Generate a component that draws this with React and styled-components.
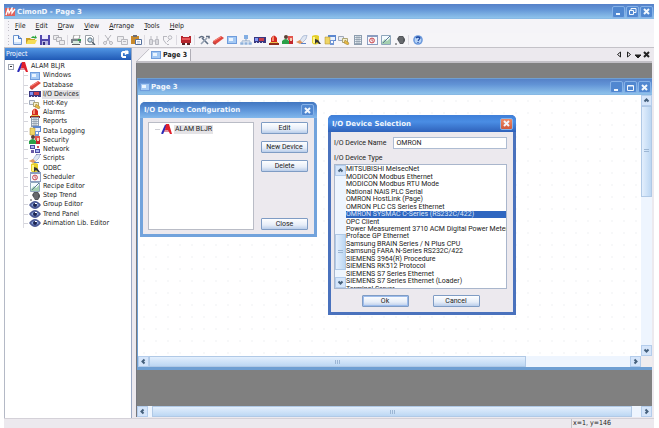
import React from "react";
import styled, { createGlobalStyle, css } from "styled-components";

const ui = '"DejaVu Sans Condensed", "DejaVu Sans", sans-serif';
const sans = 'Roboto, "Liberation Sans", Arial, sans-serif';
const titleFont = '"DejaVu Sans", sans-serif';

const Global = createGlobalStyle`
  * { box-sizing: border-box; }
  body { margin: 0; background: #fff; }
  button, input { font: inherit; color: inherit; margin: 0; padding: 0; }
  ul { list-style: none; margin: 0; padding: 0; }
`;

/* ---------- icons ---------- */

const drawings = {
  logo: (
    <>
      <path d="M0 1h10v8H0z" fill="#e0635c" />
      <path d="M1 8 3 2l1 4 3-5v5l3-4" fill="none" stroke="#fff" strokeWidth="1.3" />
    </>
  ),
  project: (
    <>
      <path d="M1 10 5 1" stroke="#2a2ab8" strokeWidth="2" />
      <path d="M5 0h3l3 10H9L7 6H4z" fill="#e0202c" />
      <path d="M3 7h5" stroke="#c02040" />
    </>
  ),
  newFile: (
    <>
      <path d="M2.500.5h5l3 3v6h-8z" fill="#f5faff" stroke="#6c94cf" />
      <path d="M7.500.5v3h3" fill="#bcd4f4" stroke="#3e6fc0" />
      <path d="M3 7h7v2H3z" fill="#cfe2fa" />
    </>
  ),
  open: (
    <>
      <path d="M1 3h4l1 1h4v5H1z" fill="#c99f25" />
      <path d="m1 9 2-4h9l-2 4z" fill="#f5dc55" />
      <path d="M6 3c1-2 3-2 4-1V0l2 3-3 1 1-1" fill="#2ba63d" />
    </>
  ),
  save: (
    <>
      <path d="M1 0h10v10H1z" fill="#5148ad" />
      <path d="M3 0h6v4H3z" fill="#eceafc" />
      <path d="M3 6h6v4H3z" fill="#b9b6e0" />
      <path d="M4 7h2v3H4z" fill="#37307f" />
    </>
  ),
  copies: (
    <g fill="#ececee" stroke="#b4b4ba">
      <path d="M.5.5h5v4h-5z" />
      <path d="M3.500 2.500h5v4h-5z" />
      <path d="M6.500 5.500h5v4h-5z" />
    </g>
  ),
  print: (
    <>
      <path d="m4 0 6 0-1 4H3z" fill="#fff" stroke="#777" strokeWidth=".7" />
      <path d="M1 4h10v4H1z" fill="#7c858c" />
      <path d="M3 6h6v3H3z" fill="#d6e9dc" />
      <path d="M8 4h3v2H8z" fill="#2f9f4d" />
      <path d="M2 9h8v1H2z" fill="#5d6469" />
    </>
  ),
  preview: (
    <>
      <path d="M1.500.5h6l2 2v7h-8z" fill="#fff" stroke="#9aa0a8" />
      <circle cx="6" cy="5" r="2.200" fill="#c7e1f0" stroke="#5d6c78" />
      <path d="m8 7 3 3" stroke="#4d5c68" strokeWidth="1.400" />
    </>
  ),
  cut: (
    <g fill="none" stroke="#b5b5bb">
      <path d="m3 0 5 7M9 0 4 7" />
      <circle cx="3" cy="8" r="1.500" />
      <circle cx="9" cy="8" r="1.500" />
    </g>
  ),
  copy: (
    <g fill="#eeeef0" stroke="#b9b9bf">
      <path d="M1.500 1.500h6v5h-6z" />
      <path d="M5.500 4.500h6v5h-6z" />
      <path d="M7 6.500h3" />
    </g>
  ),
  paste: (
    <>
      <path d="M1 1h8v8H1z" fill="#c98a2b" />
      <path d="M3 0h4v2H3z" fill="#6b6f78" />
      <path d="M5.500 4.500h6v5h-6z" fill="#fff" stroke="#56719e" />
      <path d="M7 6.500h3M7 8h3" stroke="#8aa0c0" strokeWidth=".6" />
    </>
  ),
  find: (
    <g fill="#d9d9de" stroke="#b9b9c0">
      <path d="M1.500 4.500h3v5h-3zM7.500 4.500h3v5h-3z" />
      <path d="M3 1v3M9 1v3M5 6h2" />
    </g>
  ),
  replace: (
    <g fill="none" stroke="#b9b9c0">
      <path d="M1 1.500h4M1.500 2v3l3 4" />
      <circle cx="8" cy="2.500" r="1.800" />
      <path d="M5 7 8 4M5 9.500h2" />
    </g>
  ),
  machine: (
    <>
      <path d="M1 1h2v1h6V1h2v7H1z" fill="#b5262d" />
      <path d="M2 3h8v2H2z" fill="#e8575a" />
      <path d="M2 8h3v2H2zM7 8h3v2H7z" fill="#562428" />
    </>
  ),
  tools: (
    <g fill="none" strokeWidth="1.600">
      <path d="m4 3 6 6" stroke="#5f6f86" />
      <path d="M9 3 3 9" stroke="#96a1b2" />
      <path d="M1 3q3-3 5 0M8 1.500h3v2" stroke="#5f6c80" />
    </g>
  ),
  database: (
    <>
      <path d="m1 6 8-5 3 2-8 6H2z" fill="#e0453c" />
      <path d="m2 6 7-4" stroke="#f58a80" />
      <path d="m1 7 1 2h2" stroke="#a93d3b" fill="none" />
    </>
  ),
  windows: (
    <>
      <path d="M1 1h10v8H1z" fill="#6f9cdc" />
      <path d="M2 2h8v6H2z" fill="#a4c9f4" />
      <path d="M3 3h4v3H3z" fill="#eaf4ff" />
    </>
  ),
  netTree: (
    <>
      <path d="M6 3v3M2 8V6h8v2" fill="none" stroke="#8aa5c4" />
      <path d="M4 0h4v4H4z" fill="#83aee3" />
      <path d="M0 7h4v3H0zM4 7h4v3H4zM8 7h4v3H8z" fill="#8fb1da" stroke="#fff" strokeWidth=".5" />
    </>
  ),
  io: (
    <>
      <path d="M0 2h12v6H0z" fill="#3a3880" />
      <path d="M1 3h3v3H1z" fill="#7f96f4" />
      <path d="M5 3h5v3H5z" fill="#c8404e" />
      <path d="M2 7h1v1H2zM5 7h1v1H5zM8 7h1v1H8z" fill="#d8d8f0" />
    </>
  ),
  alarms: (
    <>
      <path d="M3 7V3q3-5 6 0v4z" fill="#d2281f" />
      <path d="M4 3q1-2 2-2v5H4z" fill="#f58c6e" />
      <path d="M1 8h10v2H1z" fill="#8d2a1c" />
      <path d="M2 7h8v1H2z" fill="#edc04b" />
    </>
  ),
  security: (
    <>
      <circle cx="4" cy="2" r="2" fill="#5b4137" />
      <path d="M0 9V6q4-4 7 0v3z" fill="#2aa048" />
      <path d="M6 1h5v4H6z" fill="#e2544e" />
      <path d="M7 5h4v4H7z" fill="#c3262c" />
      <path d="M8 3h2v3H8z" fill="#f3cbb0" />
    </>
  ),
  scripts: (
    <>
      <path d="m7 1 4-1-1 4-4 4-3-1z" fill="#dfe6f2" stroke="#8fa5c8" strokeWidth=".6" />
      <path d="m0 7 4-2 3 3-3 1z" fill="#e09860" />
      <path d="M5 8h5v1H5z" fill="#5981c6" />
    </>
  ),
  odbc: (
    <>
      <path d="M2 1q4-2 7 0v7q-4 3-7 0z" fill="#e5cf2a" />
      <path d="M3 2h2v6H3z" fill="#fff58a" />
      <path d="m5 4 3 1 3 4H9L7 7 5 9z" fill="#333" />
    </>
  ),
  logging: (
    <>
      <path d="M4 0h8v6H4z" fill="#5c87d0" />
      <path d="M5 2h6v3H5z" fill="#eaf2ff" />
      <path d="M1 2h5v7H1z" fill="#f0d565" stroke="#a98a2b" strokeWidth=".5" />
      <path d="M6 5h4v5H6z" fill="#7397d4" />
      <path d="M7 6h2v2H7z" fill="#fff" />
    </>
  ),
  hotkey: (
    <>
      <path d="M.5 1.500h5v4h-5z" fill="#e9edf5" stroke="#9fa8b8" />
      <path d="M4.500 3.500h5v4h-5z" fill="#f5f0ce" stroke="#ada574" />
      <path d="m7 5 4 3-1 2-4-2z" fill="#e6b944" stroke="#95772c" strokeWidth=".5" />
    </>
  ),
  reports: (
    <>
      <path d="M2 0h8v10H2z" fill="#8d9daf" />
      <path d="M3 1h6v8H3z" fill="#e6edf3" />
      <path d="M3 2.500h6M3 4.500h6M3 6.500h6M3 8.500h6M5 1v8M7 1v8" stroke="#7b8b9c" strokeWidth=".6" />
    </>
  ),
  network: (
    <>
      <path d="M1 0h5v4H1zM6 4h5v4H6z" fill="#4c4aa1" />
      <path d="M2 1h3v2H2zM7 5h3v2H7z" fill="#a8b5ee" />
      <path d="M2 5h3v3H2zM7 9h5v1H7z" fill="#6a5aa5" />
      <path d="M8 1h2v2H8z" fill="#d05a5e" />
    </>
  ),
  scheduler: (
    <>
      <path d="M1 0h11v10H1z" fill="#8a9dc0" />
      <path d="M2 2h9v7H2z" fill="#f8f8fc" />
      <circle cx="6" cy="5.500" r="2.400" fill="none" stroke="#c8434a" />
      <path d="M6 4v2h1.500" stroke="#c8434a" fill="none" strokeWidth=".8" />
    </>
  ),
  recipe: (
    <>
      <path d="M1.500.5h9v9h-9z" fill="#f4fbff" stroke="#8fa7bd" />
      <path d="m2 7 3-3 2 2 3-3v6H2z" fill="#a4d0b0" />
      <path d="m3 8 7-7" stroke="#5d7a98" />
    </>
  ),
  step: (
    <>
      <path d="m3 4 2-3h4l2 3v2L9 9H6z" fill="#54575b" />
      <path d="M6 2v6M8 2v6" stroke="#8a8d91" strokeWidth=".7" />
      <path d="M1 9h2" stroke="#44474b" />
    </>
  ),
  eye: (
    <>
      <path d="M0 5q6-8 12 0-6 8-12 0z" fill="#4c5a96" />
      <path d="M2 5q4-5 8 0-4 4-8 0z" fill="#8aa4dc" />
      <circle cx="6" cy="5" r="2" fill="#1d2450" />
      <path d="M6 3h2v1H6z" fill="#fff" />
    </>
  ),
  help: (
    <>
      <circle cx="6" cy="5" r="4.800" fill="#6a98dc" />
      <circle cx="6" cy="5" r="3.300" fill="#b8d4f7" />
      <path d="M4 3q2-2 4 0L6 6M6 7v1" fill="none" stroke="#1f49a0" strokeWidth="1.200" />
    </>
  ),
};

const IconSvg = styled.svg`
  display: block;
  flex: none;
  width: 12px;
  height: 10px;
`;

const Icon = ({ name }) => (
  <IconSvg viewBox="0 0 12 10" aria-hidden="true">
    {drawings[name]}
  </IconSvg>
);

const marks = {
  min: "M2 7h4",
  max: "M1.500 2.500h6v5h-6zM2 3h5",
  restore: "M3 3V1.500h5v4H6M1.500 3.500h4v4h-4z",
  close: "m2 2 5 5m0-5-5 5",
  left: "M5.500 2.500 3.500 4.500l2 2",
  right: "m3.500 2.500 2 2-2 2",
  up: "m2.500 5.500 2-2 2 2",
  down: "m2.500 3.500 2 2 2-2",
  triLeft: "M5.500 2v5l-3-2.500z",
  triRight: "M3.500 2v5l3-2.500z",
  fold: "M2 5h6L5 8z",
  dock: "M5 2H3L2 3v3l1 1h3M5 1.500h3M7.500 1v3M5 4.500 7 2",
};

const MarkSvg = styled.svg`
  display: block;
  width: 9px;
  height: 9px;
  fill: ${(p) => (p.$solid ? "currentColor" : "none")};
  stroke: currentColor;
  stroke-width: ${(p) => p.$weight || 1};
`;

const Mark = ({ name, weight, solid }) => (
  <MarkSvg viewBox="0 0 9 9" $weight={weight} $solid={solid} aria-hidden="true">
    <path d={marks[name]} />
  </MarkSvg>
);

/* ---------- shell ---------- */

const Shell = styled.div`
  display: flex;
  flex-direction: column;
  min-height: 100vh;
  padding: 4px 5px 0 4px;
  font: 7px/9px ${ui};
  color: #222;
`;

const blueBar = css`
  background: linear-gradient(#5581c8, #6294d6 35%, #8cc0ea 90%, #86b6e2);
  color: #f2f7fd;
`;

const TitleBar = styled.header`
  ${blueBar}
  display: flex;
  align-items: center;
  height: ${(p) => p.$height}px;
  padding: 0 1px;
  font: bold 7px/10px ${titleFont};
`;

const TitleText = styled.h1`
  flex: 1;
  margin: 0;
  font: inherit;
  white-space: nowrap;
`;

const CaptionButton = styled.button`
  display: grid;
  place-items: center;
  flex: none;
  width: 13px;
  height: 12px;
  margin-left: 1px;
  border: 1px solid #86b2e8;
  border-radius: 2px;
  background: ${(p) => (p.$danger ? "linear-gradient(#ee8a66, #cf5a3c)" : "#5087d0")};
  color: #f2f7fd;
`;

const MenuBar = styled.nav`
  display: flex;
  align-items: center;
  gap: 10px;
  height: 14px;
  padding-left: 4px;
  background: #f5f4f8;
`;

const Grip = styled.span`
  width: 1px;
  height: 10px;
  margin: 0 ${(p) => p.$space}px 0 0;
  background: repeating-linear-gradient(#c2c0c8 0 1px, transparent 1px 3px);
`;

const MenuButton = styled.button`
  border: 0;
  background: none;
  &::first-letter { text-decoration: underline; }
`;

const ToolBar = styled.div`
  display: flex;
  align-items: center;
  height: 15px;
  padding-left: 4px;
  border-bottom: 1px solid #c4c2c8;
  background: #f6f5f8;
`;

const ToolButton = styled.button`
  display: grid;
  place-items: center;
  width: 14px;
  height: 12px;
  border: 0;
  background: none;
`;

const Divider = styled.span`
  width: 1px;
  height: 10px;
  margin: 0 ${(p) => (p.$wide ? 2 : 1)}px 0 1px;
  background: #dddbe2;
`;

const Workspace = styled.div`
  display: flex;
  flex: 1;
  background: #ece9ee;
`;

/* ---------- project tree ---------- */

const Panel = styled.aside`
  display: flex;
  flex-direction: column;
  flex: none;
  width: 128px;
  border-right: 1px solid #9aa8c4;
  border-left: 1px solid #b4b9c6;
  background: #fff;
`;

const PanelHead = styled.h2`
  display: flex;
  align-items: center;
  justify-content: space-between;
  height: 12px;
  margin: 0;
  padding: 0 2px 0 1px;
  background: linear-gradient(#5196e4, #2059b5);
  color: #fff;
  font: 7px/9px ${ui};
`;

const Tree = styled.ul`
  display: grid;
  grid-auto-rows: 1fr;
  height: 166px;
  margin-top: 2px;
`;

const TreeRow = styled.li`
  display: flex;
  align-items: center;
  gap: 1px;
  min-height: 0;
  padding-left: ${(p) => (p.$root ? 3 : 18)}px;
`;

const Toggle = styled.button`
  display: grid;
  place-items: center;
  width: 6px;
  height: 6px;
  margin-right: 2px;
  border: 1px solid #9aa2b0;
  background: #fff;
  &::after { content: ""; width: 2px; height: 1px; background: #333; }
`;

const Branch = styled.span`
  align-self: stretch;
  width: 5px;
  border-left: 1px solid #dcdce2;
  background: linear-gradient(#d4d4da, #d4d4da) 0 50% / 5px 1px no-repeat;
`;

const TreeLabel = styled.span`
  padding: 0 1px;
  line-height: 9px;
  white-space: nowrap;
  background: ${(p) => (p.$active ? "#e4e3e6" : "none")};
`;

/* ---------- documents ---------- */

const Documents = styled.main`
  display: flex;
  flex: 1;
  flex-direction: column;
  min-width: 0;
  margin: 0 2px 1px 4px;
`;

const TabStrip = styled.div`
  display: flex;
  align-items: flex-end;
  justify-content: space-between;
  height: 15px;
  border-bottom: 2px solid #c2c0c6;
`;

const Tab = styled.button`
  display: flex;
  align-items: center;
  gap: 1px;
  height: 12px;
  padding: 0 3px 0 14px;
  border: 0;
  border-right: 1px solid #b0aeb6;
  background: linear-gradient(135deg, #ece9ee 9px, #b9b7bf 9px, #fbfafc 10px);
  font: bold 7px/9px ${ui};
`;

const TabTools = styled.div`
  display: flex;
  align-self: center;
  padding-right: 1px;
`;

const PlainButton = styled.button`
  display: grid;
  place-items: center;
  width: 9px;
  height: 9px;
  border: 0;
  background: none;
`;

const Desk = styled.div`
  display: flex;
  flex: 1;
  flex-direction: column;
  padding-top: 15px;
  border-left: 1px solid #77777c;
  background: #808080;
`;

const PageWindow = styled.section`
  display: flex;
  flex: 1;
  flex-direction: column;
  margin-bottom: 36px;
  border: solid #6f9fd2;
  border-width: 1px 0 3px 1px;
  background: #fff;
`;

const PageBody = styled.div`
  display: flex;
  flex: 1;
`;

const Canvas = styled.div`
  position: relative;
  flex: 1;
  background: radial-gradient(circle, #f7f8f9 1px, transparent 1px) 0 0 / 12px 12px #fff;
`;

const Track = styled.div`
  display: flex;
  flex: none;
  flex-direction: ${(p) => (p.$vertical ? "column" : "row")};
  width: ${(p) => (p.$vertical ? "11px" : "auto")};
  height: ${(p) => (p.$vertical ? "auto" : "11px")};
  background: #eef5fe;
`;

const ArrowButton = styled.button`
  display: grid;
  place-items: center;
  flex: none;
  width: 11px;
  height: 11px;
  border: 1px solid #b4cdec;
  background: #d5e5fa;
  color: #45607c;
`;

const Thumb = styled.div`
  display: grid;
  place-items: center;
  flex: ${(p) => p.$size};
  border: 1px solid #b0c9e6;
  background: ${(p) => `linear-gradient(${p.$vertical ? "90deg" : "180deg"}, #e3effd, #bcd7f3)`};
  &::after {
    content: "";
    width: 5px;
    height: 4px;
    background: repeating-linear-gradient(${(p) => (p.$vertical ? "180deg" : "90deg")}, #9cb6d4 0 1px, transparent 1px 2px);
  }
`;

const Gap = styled.div`
  flex: ${(p) => p.$size};
`;

const Corner = styled.div`
  flex: none;
  width: 11px;
  background: #f0edef;
`;

/* ---------- dialogs ---------- */

const Dialog = styled.section`
  position: absolute;
  left: ${(p) => p.$left}px;
  top: ${(p) => p.$top}px;
  width: ${(p) => p.$width}px;
  border: solid ${(p) => (p.$front ? "#4a72bd" : "#72a3dc")};
  border-width: 0 3px 3px;
  border-radius: 5px 5px 0 0;
  background: ${(p) => (p.$front ? "#4a72bd" : "#72a3dc")};
  font: 7px/9px ${sans};
`;

const DialogHead = styled.header`
  display: flex;
  align-items: center;
  justify-content: space-between;
  height: ${(p) => (p.$front ? 17 : 16)}px;
  margin: 0 -3px;
  padding: 0 3px 0 4px;
  border-radius: 5px 5px 0 0;
  background: ${(p) =>
    p.$front
      ? "linear-gradient(#3f7fd8, #4a8de4 40%, #2f62bb)"
      : "linear-gradient(#4176c0, #5b92d8 45%, #82b8ec)"};
  color: #f2f7fd;
`;

const DialogTitle = styled.h2`
  margin: 0;
  font: bold 7px/10px ${titleFont};
  white-space: nowrap;
`;

const ConfigBody = styled.div`
  display: flex;
  gap: 7px;
  height: 116px;
  padding: 4px 6px 4px 5px;
  background: #ece9ee;
`;

const DeviceTree = styled.ul`
  flex: 1;
  padding: 1px 6px;
  border: 1px solid #b9bcc6;
  background: #fff;
`;

const DeviceRow = styled.li`
  display: flex;
  align-items: center;
  gap: 1px;
  height: 10px;
  &::before { content: ""; width: 5px; height: 1px; background: #d0d0d6; }
`;

const ButtonColumn = styled.div`
  display: flex;
  flex-direction: column;
  gap: 7px;
  width: 47px;
`;

const PushButton = styled.button`
  width: 47px;
  height: 12px;
  margin-top: ${(p) => (p.$last ? "auto" : "0")};
  border: 1px solid #7f9cc4;
  border-radius: 1px;
  background: linear-gradient(#fdfeff, #e6edf8 60%, #b9cdea);
  box-shadow: ${(p) => (p.$primary ? "inset 0 0 0 1px #9dbcec" : "none")};
  color: #222;
  white-space: nowrap;
`;

const PickBody = styled.form`
  padding: 5px 6px 3px 3px;
  background: #ece9ee;
`;

const Field = styled.div`
  display: flex;
  align-items: center;
  gap: 7px;
`;

const TextBox = styled.input`
  flex: 1;
  min-width: 0;
  height: 12px;
  padding: 0 2px;
  border: 1px solid #aebcd2;
  background: #fff;
`;

const Caption = styled.div`
  margin: 5px 0 1px;
`;

const ListFrame = styled.div`
  display: flex;
  height: 125px;
  overflow: hidden;
  border: 1px solid #a9b6cc;
  background: #fff;
`;

const Options = styled.ul`
  display: grid;
  grid-auto-rows: 1fr;
  flex: 1;
  height: 128px;
  padding-top: 1px;
`;

const Option = styled.li`
  display: flex;
  align-items: center;
  min-height: 0;
  white-space: nowrap;
  line-height: 7px;
  background: ${(p) => (p.$active ? "#2f66c0" : "none")};
  color: ${(p) => (p.$active ? "#dfe9fa" : "#222")};
`;

const Actions = styled.div`
  display: flex;
  justify-content: center;
  gap: 24px;
  padding: 6px 0 2px;
`;

const StatusBar = styled.footer`
  display: flex;
  align-items: center;
  justify-content: flex-end;
  height: 10px;
  border-top: 1px solid #d4d1d8;
  background: #ece9ee;
`;

const Status = styled.span`
  width: ${(p) => p.$width}px;
  padding-left: 1px;
  border-left: 1px solid #c5c2c9;
  white-space: nowrap;
`;

const menus = ["File", "Edit", "Draw", "View", "Arrange", "Tools", "Help"];

const toolGroups = [
  ["newFile", "open", "save", "copies"],
  ["print", "preview"],
  ["cut", "copy", "paste"],
  ["find", "replace"],
  ["machine"],
  ["tools", "database", "windows", "netTree", "io", "alarms", "security", "scripts", "odbc", "logging", "hotkey", "reports", "scheduler", "recipe", "step"],
  ["help"],
];

const treeItems = [
  ["windows", "Windows"],
  ["database", "Database"],
  ["io", "I/O Devices"],
  ["hotkey", "Hot-Key"],
  ["alarms", "Alarms"],
  ["reports", "Reports"],
  ["logging", "Data Logging"],
  ["security", "Security"],
  ["network", "Network"],
  ["scripts", "Scripts"],
  ["odbc", "ODBC"],
  ["scheduler", "Scheduler"],
  ["recipe", "Recipe Editor"],
  ["step", "Step Trend"],
  ["eye", "Group Editor"],
  ["eye", "Trend Panel"],
  ["eye", "Animation Lib. Editor"],
];

const devices = [
  "MITSUBISHI MelsecNet",
  "MODICON Modbus Ethernet",
  "MODICON Modbus RTU Mode",
  "National NAiS PLC Serial",
  "OMRON HostLink (Page)",
  "OMRON PLC CS Series Ethernet",
  "OMRON SYSMAC C-Series (RS232C/422)",
  "OPC Client",
  "Power Measurement 3710 ACM Digital Power Meter",
  "Proface GP Ethernet",
  "Samsung BRAIN Series / N Plus CPU",
  "Samsung FARA N-Series RS232C/422",
  "SIEMENS 3964(R) Procedure",
  "SIEMENS RK512 Protocol",
  "SIEMENS S7 Series Ethernet",
  "SIEMENS S7 Series Ethernet (Loader)",
  "Terminal Server",
];

const WindowButtons = ({ middle }) => (
  <>
    <CaptionButton aria-label="Minimize"><Mark name="min" weight={2} /></CaptionButton>
    <CaptionButton aria-label="Resize"><Mark name={middle} /></CaptionButton>
    <CaptionButton aria-label="Close"><Mark name="close" weight={2} /></CaptionButton>
  </>
);

const Scroll = ({ vertical, before = 0, size, after = 0 }) => (
  <Track $vertical={vertical}>
    <ArrowButton type="button" aria-label="Scroll back"><Mark name={vertical ? "up" : "left"} weight={2} /></ArrowButton>
    <Gap $size={before} />
    <Thumb $size={size} $vertical={vertical} />
    <Gap $size={after} />
    <ArrowButton type="button" aria-label="Scroll forward"><Mark name={vertical ? "down" : "right"} weight={2} /></ArrowButton>
  </Track>
);

const ScrollRow = styled.div`
  display: flex;
  > :first-child { flex: 1; }
`;

const ConfigDialog = () => (
  <Dialog $left={2} $top={7} $width={177} aria-label="I/O Device Configuration">
    <DialogHead>
      <DialogTitle>I/O Device Configuration</DialogTitle>
      <CaptionButton aria-label="Close"><Mark name="close" weight={2} /></CaptionButton>
    </DialogHead>
    <ConfigBody>
      <DeviceTree>
        <DeviceRow>
          <Icon name="project" />
          <TreeLabel $active>ALAM BLJR</TreeLabel>
        </DeviceRow>
      </DeviceTree>
      <ButtonColumn>
        <PushButton>Edit</PushButton>
        <PushButton>New Device</PushButton>
        <PushButton>Delete</PushButton>
        <PushButton $last>Close</PushButton>
      </ButtonColumn>
    </ConfigBody>
  </Dialog>
);

const SelectionDialog = () => (
  <Dialog $front $left={190} $top={20} $width={188} aria-label="I/O Device Selection">
    <DialogHead $front>
      <DialogTitle>I/O Device Selection</DialogTitle>
      <CaptionButton $danger aria-label="Close"><Mark name="close" weight={2} /></CaptionButton>
    </DialogHead>
    <PickBody onSubmit={(e) => e.preventDefault()}>
      <Field>
        <label htmlFor="device-name">I/O Device Name</label>
        <TextBox id="device-name" defaultValue="OMRON" />
      </Field>
      <Caption id="device-type">I/O Device Type</Caption>
      <ListFrame>
        <Scroll vertical before={60} size={36} after={7} />
        <Options role="listbox" aria-labelledby="device-type">
          {devices.map((name, i) => (
            <Option key={name} role="option" aria-selected={i === 6} $active={i === 6}>{name}</Option>
          ))}
        </Options>
      </ListFrame>
      <Actions>
        <PushButton $primary>Ok</PushButton>
        <PushButton type="button">Cancel</PushButton>
      </Actions>
    </PickBody>
  </Dialog>
);

export default function App() {
  return (
    <Shell>
      <Global />
      <TitleBar $height={15}>
        <Icon name="logo" />
        <TitleText>CimonD - Page 3</TitleText>
        <WindowButtons middle="restore" />
      </TitleBar>
      <MenuBar>
        <Grip $space={-4} />
        {menus.map((name) => <MenuButton key={name}>{name}</MenuButton>)}
      </MenuBar>
      <ToolBar>
        <Grip $space={1} />
        {toolGroups.map((group, i) => (
          <React.Fragment key={i}>
            {i > 0 && <Divider $wide={i > 1} />}
            {group.map((name) => (
              <ToolButton key={name} aria-label={name}><Icon name={name} /></ToolButton>
            ))}
          </React.Fragment>
        ))}
      </ToolBar>
      <Workspace>
        <Panel>
          <PanelHead>
            Project
            <Mark name="dock" weight={2} />
          </PanelHead>
          <Tree>
            <TreeRow $root>
              <Toggle aria-label="Collapse" />
              <Icon name="project" />
              <TreeLabel>ALAM BLJR</TreeLabel>
            </TreeRow>
            {treeItems.map(([icon, name]) => (
              <TreeRow key={name}>
                <Branch />
                <Icon name={icon} />
                <TreeLabel $active={name === "I/O Devices"}>{name}</TreeLabel>
              </TreeRow>
            ))}
          </Tree>
        </Panel>
        <Documents>
          <TabStrip>
            <Tab><Icon name="windows" />Page 3</Tab>
            <TabTools>
              <PlainButton aria-label="Previous tab"><Mark name="triLeft" /></PlainButton>
              <PlainButton aria-label="Next tab"><Mark name="triRight" /></PlainButton>
              <PlainButton aria-label="Tab list"><Mark name="fold" solid /></PlainButton>
              <PlainButton aria-label="Close tab"><Mark name="close" weight={2} /></PlainButton>
            </TabTools>
          </TabStrip>
          <Desk>
            <PageWindow>
              <TitleBar as="div" $height={16}>
                <Icon name="windows" />
                <TitleText as="h2">Page 3</TitleText>
                <WindowButtons middle="max" />
              </TitleBar>
              <PageBody>
                <Canvas>
                  <ConfigDialog />
                  <SelectionDialog />
                </Canvas>
                <Scroll vertical size={90} after={150} />
              </PageBody>
              <ScrollRow>
                <Scroll size={376} after={104} />
                <Corner />
              </ScrollRow>
            </PageWindow>
            <Scroll before={4} size={480} after={9} />
          </Desk>
        </Documents>
      </Workspace>
      <StatusBar>
        <Status $width={46}>x=1, y=146</Status>
        <Status $width={37} />
      </StatusBar>
    </Shell>
  );
}
